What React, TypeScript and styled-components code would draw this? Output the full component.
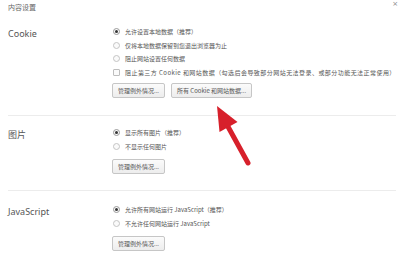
import React from "react";
import styled, { createGlobalStyle } from "styled-components";

const Global = createGlobalStyle`
  html, body { margin: 0; padding: 0; background: #fff; }
  body { font-family: "Noto Sans CJK SC", "Noto Sans", sans-serif; }
`;

const Page = styled.div`
  position: relative;
  width: 400px;
  height: 266px;
  overflow: hidden;
  background: #fff;
  display: flex;
  flex-direction: column;
`;

const Header = styled.div`
  height: 20px;
  display: flex;
  align-items: flex-start;
  justify-content: space-between;
  padding: 0 2px 0 8px;
  box-sizing: border-box;
`;

const Title = styled.div`
  font-size: 7px;
  line-height: 7px;
  margin-top: 4px;
  color: #666;
`;

const Close = styled.div`
  font-size: 7px;
  line-height: 7px;
  margin-top: 1px;
  color: #888;
  font-family: "DejaVu Sans", sans-serif;
`;

const Body = styled.div`
  flex: 1;
  display: flex;
`;

const Content = styled.div`
  flex: 1;
  padding: 0 8px 0 8px;
`;

const Scrollbar = styled.div`
  width: 6px;
  display: flex;
  flex-direction: column;
  align-items: center;
  background: #f6f6f6;
  border-left: 1px solid #eee;
`;

const ScrollArrow = styled.div`
  width: 0;
  height: 0;
  margin-top: 2px;
  border-left: 2px solid transparent;
  border-right: 2px solid transparent;
  border-bottom: 2px solid #999;
`;

const Thumb = styled.div`
  width: 5px;
  height: 46px;
  margin-top: 3px;
  background: #cfcfcf;
  border-radius: 1px;
`;

const Section = styled.div<{ $pt: number; $pb: number; $divider?: boolean }>`
  display: grid;
  grid-template-columns: 104px 1fr;
  padding-top: ${(p) => p.$pt}px;
  padding-bottom: ${(p) => p.$pb}px;
  border-bottom: ${(p) => (p.$divider ? "1px solid #ececec" : "none")};
`;

const Label = styled.div`
  font-family: "Noto Sans", "Noto Sans CJK SC", sans-serif;
  font-size: 9px;
  line-height: 13.5px;
  padding-top: 1.5px;
  color: #555;
`;

const Controls = styled.div`
  display: flex;
  flex-direction: column;
`;

const Row = styled.div<{ $spacing?: number }>`
  height: 13.5px;
  display: flex;
  align-items: center;
  gap: 5px;
  font-size: 6px;
  letter-spacing: ${(p) => p.$spacing ?? 0}px;
  color: #555;
  white-space: nowrap;
`;

const Radio = styled.span<{ $on?: boolean }>`
  width: 7px;
  height: 7px;
  box-sizing: border-box;
  border-radius: 50%;
  border: 1px solid ${(p) => (p.$on ? "#9a9a9a" : "#c4c4c4")};
  background: #fafafa;
  display: inline-flex;
  align-items: center;
  justify-content: center;
  margin-left: 1px;
  &::after {
    content: "";
    width: 3px;
    height: 3px;
    border-radius: 50%;
    background: ${(p) => (p.$on ? "#333" : "transparent")};
  }
`;

const Check = styled.span`
  width: 7px;
  height: 7px;
  box-sizing: border-box;
  border: 1px solid #bdbdbd;
  border-radius: 1px;
  background: #fafafa;
  margin-left: 1px;
`;

const Buttons = styled.div<{ $mt: number }>`
  display: flex;
  gap: 6px;
  margin-top: ${(p) => p.$mt}px;
`;

const Button = styled.div`
  height: 15px;
  box-sizing: border-box;
  padding: 0 5px;
  display: flex;
  align-items: center;
  font-size: 6px;
  color: #555;
  border: 1px solid #c6c6c6;
  border-radius: 2px;
  background: linear-gradient(#fbfbfb, #ededed);
  white-space: nowrap;
`;

const Arrow = styled.svg`
  position: absolute;
  left: 0;
  top: 0;
  pointer-events: none;
`;

export default function App() {
  return (
    <Page>
      <Global />
      <Header>
        <Title>内容设置</Title>
        <Close>×</Close>
      </Header>
      <Body>
        <Content>
          <Section $pt={5} $pb={17} $divider>
            <Label>Cookie</Label>
            <Controls>
              <Row><Radio $on />允许设置本地数据（推荐）</Row>
              <Row><Radio />仅将本地数据保留到您退出浏览器为止</Row>
              <Row><Radio />阻止网站设置任何数据</Row>
              <Row $spacing={0.45}><Check />阻止第三方 Cookie 和网站数据（勾选后会导致部分网站无法登录、或部分功能无法正常使用）</Row>
              <Buttons $mt={4}>
                <Button>管理例外情况...</Button>
                <Button>所有 Cookie 和网站数据...</Button>
              </Buttons>
            </Controls>
          </Section>
          <Section $pt={10} $pb={16} $divider>
            <Label>图片</Label>
            <Controls>
              <Row><Radio $on />显示所有图片（推荐）</Row>
              <Row><Radio />不显示任何图片</Row>
              <Buttons $mt={6}>
                <Button>管理例外情况...</Button>
              </Buttons>
            </Controls>
          </Section>
          <Section $pt={12} $pb={0}>
            <Label>JavaScript</Label>
            <Controls>
              <Row><Radio $on />允许所有网站运行 JavaScript（推荐）</Row>
              <Row><Radio />不允许任何网站运行 JavaScript</Row>
              <Buttons $mt={6}>
                <Button>管理例外情况...</Button>
              </Buttons>
            </Controls>
          </Section>
        </Content>
        <Scrollbar>
          <ScrollArrow />
          <Thumb />
        </Scrollbar>
      </Body>
      <Arrow width="400" height="266" viewBox="0 0 400 266">
        <line x1="248" y1="163" x2="226" y2="123" stroke="#d7202b" strokeWidth="5" strokeLinecap="round" />
        <polygon points="217,106 237.5,122 219.5,132" fill="#d7202b" />
      </Arrow>
    </Page>
  );
}
